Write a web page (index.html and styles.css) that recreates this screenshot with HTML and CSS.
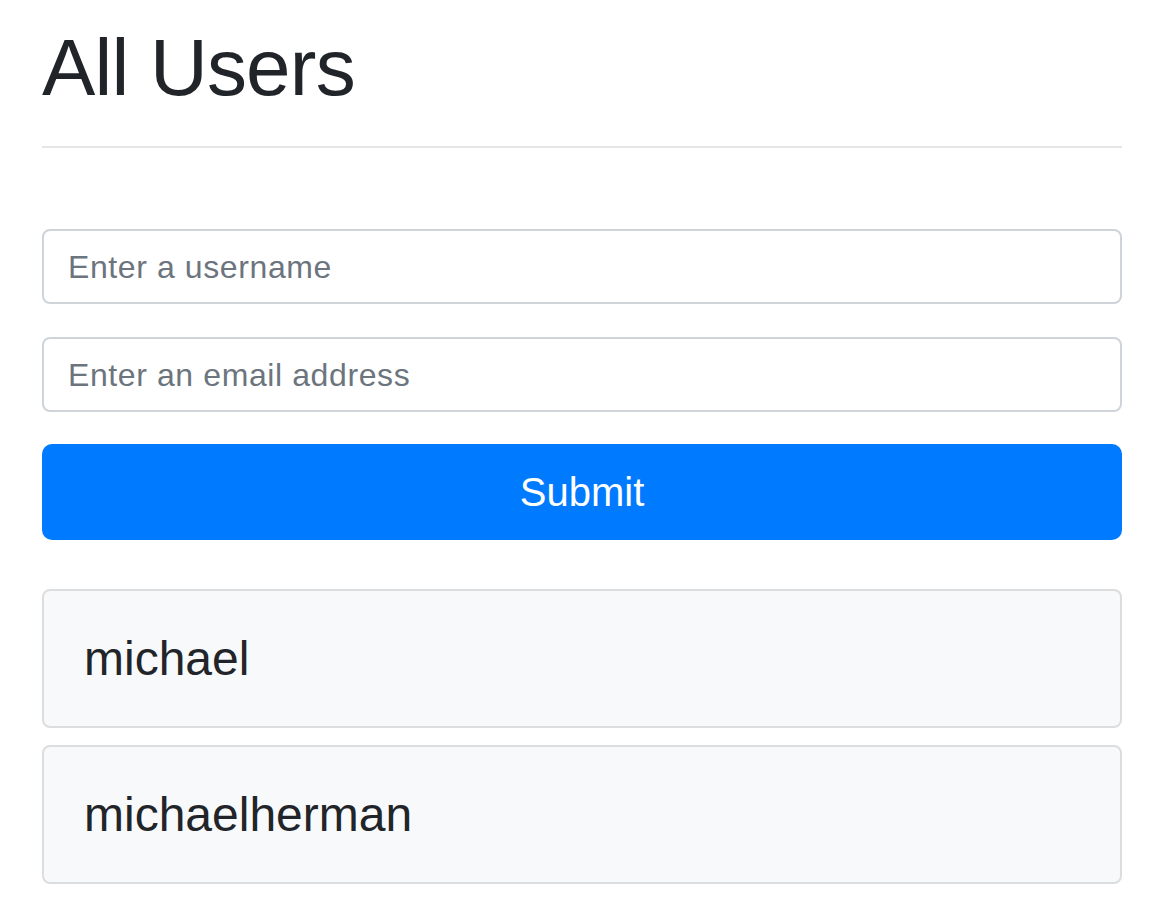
FILE: index.html
```html
<!DOCTYPE html>
<html lang="en">
<head>
<meta charset="utf-8">
<title>All Users</title>
<link rel="stylesheet" href="styles.css">
</head>
<body>
<main class="page">
  <h1 class="title">All Users</h1>
  <hr class="rule">
  <form class="user-form">
    <div class="form-group">
      <input class="form-control" type="text" name="username" placeholder="Enter a username">
    </div>
    <div class="form-group">
      <input class="form-control" type="email" name="email" placeholder="Enter an email address">
    </div>
    <button class="btn-submit" type="submit">Submit</button>
  </form>
  <div class="user-list">
    <div class="card"><h4 class="card-title">michael</h4></div>
    <div class="card"><h4 class="card-title">michaelherman</h4></div>
  </div>
</main>
</body>
</html>
```
FILE: styles.css
```css
* { box-sizing: border-box; }
html, body { margin: 0; padding: 0; background: #fff; }
body {
  font-family: "Liberation Sans", Arial, sans-serif;
  color: #212529;
}
.page {
  width: 1080px;
  margin-left: 42px;
  padding-top: 20px;
}
.title {
  margin: 0;
  font-size: 80px;
  font-weight: 400;
  line-height: 96px;
  letter-spacing: -0.8px;
  color: #212529;
}
.rule {
  margin: 30px 0 0 0;
  border: 0;
  border-top: 2px solid #e6e6e6;
  height: 0;
}
.user-form {
  margin-top: 81px;
  display: flex;
  flex-direction: column;
}
.form-group { margin-bottom: 33px; }
.form-group + .form-group { margin-bottom: 32px; }
.form-control {
  display: block;
  width: 100%;
  height: 75px;
  padding: 2px 24px 0;
  font-family: inherit;
  font-size: 32px;
  letter-spacing: 0.6px;
  color: #495057;
  background: #fff;
  border: 2px solid #ced4da;
  border-radius: 8px;
  outline: none;
}
.form-control::placeholder { color: #6c757d; opacity: 1; }
.btn-submit {
  display: block;
  width: 100%;
  height: 96px;
  font-family: inherit;
  font-size: 40px;
  color: #fff;
  background: #007bff;
  border: 2px solid #007bff;
  border-radius: 10px;
  padding: 0;
  cursor: pointer;
}
.user-list {
  margin-top: 49px;
  display: flex;
  flex-direction: column;
  gap: 17px;
}
.card {
  height: 139px;
  background: #f8f9fa;
  border: 2px solid #dcdddf;
  border-radius: 8px;
  padding: 0 40px;
  display: flex;
  align-items: center;
}
.card-title {
  margin: 0;
  font-size: 48px;
  font-weight: 400;
  line-height: 57px;
  color: #212529;
}
```
